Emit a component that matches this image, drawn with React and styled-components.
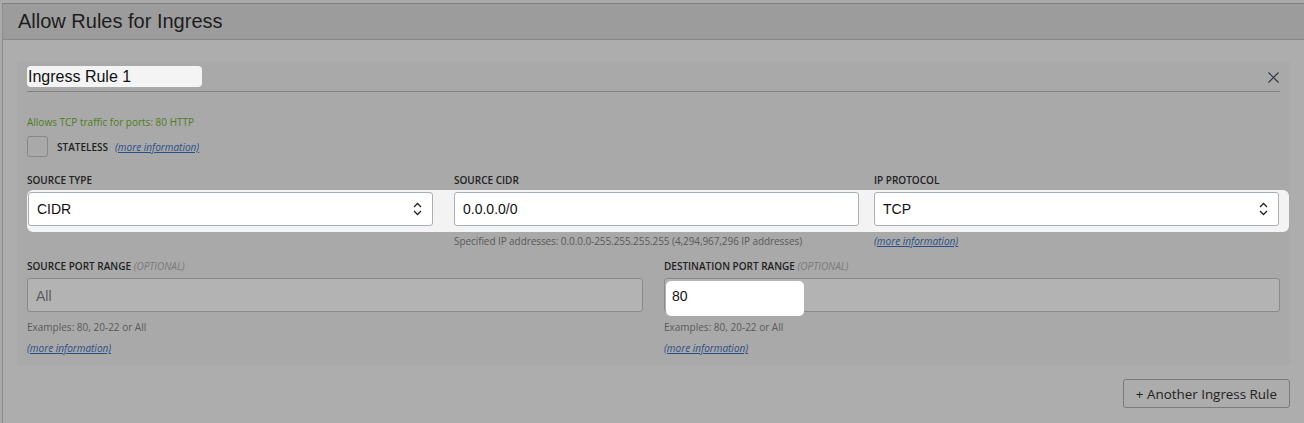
import React from "react";
import styled, { createGlobalStyle } from "styled-components";

const GlobalStyle = createGlobalStyle`
  html, body {
    margin: 0;
    padding: 0;
    background: #aaaaaa;
  }
  body {
    font-family: "Open Sans", "Noto Sans", sans-serif;
  }
`;

const Page = styled.div`
  width: 1304px;
  height: 423px;
  padding: 3px 0 0 2px;
  box-sizing: border-box;
  overflow: hidden;
`;

const Panel = styled.section`
  border-top: 1px solid #7f7f7f;
  border-left: 1px solid #8c8c8c;
  background: #adadad;
  height: 100%;
`;

const Header = styled.header`
  height: 35px;
  display: flex;
  align-items: center;
  padding-left: 15px;
  background: #9c9c9c;
  border-bottom: 1px solid #878787;
`;

const Title = styled.h2`
  margin: 0;
  font-family: "Liberation Sans", Arial, sans-serif;
  font-size: 20px;
  font-weight: 400;
  color: #1d1d1d;
`;

const Body = styled.div`
  padding: 21px 14px 0 14px;
  display: flex;
  flex-direction: column;
`;

const Card = styled.div`
  background: #a9a9a9;
  border-radius: 3px;
  padding: 5px 10px 10px 10px;
`;

const CardHead = styled.div`
  display: flex;
  align-items: flex-start;
  justify-content: space-between;
  height: 25px;
  border-bottom: 1px solid #818181;
`;

const NameField = styled.div`
  width: 174px;
  height: 21px;
  padding-left: 1px;
  display: flex;
  align-items: center;
  background: #f4f4f4;
  border-radius: 4px;
  font-family: "Liberation Sans", Arial, sans-serif;
  font-size: 16px;
  color: #111;
`;

const Close = styled.button`
  border: 0;
  background: none;
  padding: 0;
  margin: 6px 1px 0 0;
  width: 11px;
  height: 11px;
  display: flex;
  cursor: pointer;
`;

const Note = styled.div`
  margin-top: 23px;
  font-size: 10px;
  line-height: 14px;
  color: ${(p) => p.$color || "#595959"};
`;

const CheckRow = styled.div`
  display: flex;
  align-items: center;
  margin-top: 7px;
  height: 21px;
`;

const Checkbox = styled.span`
  width: 19px;
  height: 19px;
  border: 1px solid #878787;
  border-radius: 3px;
  margin-right: 9px;
`;

const Label = styled.span`
  font-size: 10px;
  font-weight: 600;
  color: #222;
  margin-right: 7px;
`;

const Optional = styled.em`
  font-weight: 400;
  color: #7a7a7a;
`;

const Link = styled.a`
  font-size: 10px;
  font-style: italic;
  color: #2a4f88;
  text-decoration: underline;
  cursor: pointer;
`;

const Grid = styled.div`
  display: grid;
  grid-template-columns: ${(p) => p.$cols};
  column-gap: ${(p) => p.$gap || 0}px;
  margin-top: ${(p) => p.$top || 0}px;
  line-height: 14px;
`;

const Band = styled.div`
  display: grid;
  grid-template-columns: 426px 420px 405px;
  margin-top: 3px;
  margin-right: -9px;
  padding: 2px 9px 6px 1px;
  background: #f3f3f3;
  border-radius: 6px;
`;

const Control = styled.div`
  width: 405px;
  height: 34px;
  box-sizing: border-box;
  display: flex;
  align-items: center;
  justify-content: space-between;
  padding: 0 10px 0 8px;
  background: #fff;
  border: 1px solid #a9afb8;
  border-radius: 3px;
  font-family: "Liberation Sans", Arial, sans-serif;
  font-size: 14px;
  color: #111;
`;

const DimInput = styled.div`
  height: 34px;
  box-sizing: border-box;
  display: flex;
  align-items: flex-start;
  padding: ${(p) => (p.$inset ? "2px 0 0 1px" : "10px 0 0 8px")};
  background: #b3b3b3;
  border: 1px solid #8a8a8a;
  border-radius: 3px;
  font-family: "Liberation Sans", Arial, sans-serif;
  font-size: 14px;
  color: #5c5c5c;
`;

const Spot = styled.div`
  width: 138px;
  height: 35px;
  flex-shrink: 0;
  padding: 8px 0 0 6px;
  box-sizing: border-box;
  background: #fff;
  border-radius: 5px;
  color: #111;
`;

const Help = styled.div`
  font-size: 10px;
  line-height: 14px;
  color: #5a5a5a;
  margin-top: ${(p) => p.$top || 0}px;
`;

const Spec = styled(Help)`
  letter-spacing: -0.08px;
`;

const Footer = styled.div`
  display: flex;
  justify-content: flex-end;
  margin-top: 14px;
`;

const AddButton = styled.button`
  height: 29px;
  padding: 0 12px;
  background: #acacac;
  border: 1px solid #7b7b7b;
  border-radius: 3px;
  font-family: "Open Sans", "Noto Sans", sans-serif;
  font-size: 13.4px;
  color: #222;
  cursor: pointer;
`;

const Chevrons = () => (
  <svg width="9" height="14" viewBox="0 0 9 14" fill="none" stroke="#222" strokeWidth="1.3">
    <path d="M1 5l3.5-3.5L8 5" />
    <path d="M1 9l3.5 3.5L8 9" />
  </svg>
);

export default function App() {
  return (
    <>
      <GlobalStyle />
      <Page>
        <Panel>
          <Header>
            <Title>Allow Rules for Ingress</Title>
          </Header>
          <Body>
            <Card>
              <CardHead>
                <NameField>Ingress Rule 1</NameField>
                <Close aria-label="remove">
                  <svg width="11" height="11" viewBox="0 0 11 11" stroke="#2f3540" strokeWidth="1.1">
                    <path d="M0.5 0.5l10 10M10.5 0.5l-10 10" />
                  </svg>
                </Close>
              </CardHead>
              <Note $color="#4f7d1c">Allows TCP traffic for ports: 80 HTTP</Note>
              <CheckRow>
                <Checkbox />
                <Label>STATELESS</Label>
                <Link>(more information)</Link>
              </CheckRow>

              <Grid $cols="427px 420px 405px" $top={16}>
                <Label>SOURCE TYPE</Label>
                <Label>SOURCE CIDR</Label>
                <Label>IP PROTOCOL</Label>
              </Grid>
              <Band>
                <Control>
                  CIDR
                  <Chevrons />
                </Control>
                <Control>0.0.0.0/0</Control>
                <Control>
                  TCP
                  <Chevrons />
                </Control>
              </Band>
              <Grid $cols="427px 420px 405px" $top={2}>
                <span />
                <Spec>Specified IP addresses: 0.0.0.0-255.255.255.255 (4,294,967,296 IP addresses)</Spec>
                <Link>(more information)</Link>
              </Grid>

              <Grid $cols="616px 616px" $gap={21} $top={11}>
                <Label>
                  SOURCE PORT RANGE <Optional>(OPTIONAL)</Optional>
                </Label>
                <Label>
                  DESTINATION PORT RANGE <Optional>(OPTIONAL)</Optional>
                </Label>
              </Grid>
              <Grid $cols="616px 616px" $gap={21} $top={5}>
                <DimInput>All</DimInput>
                <DimInput $inset>
                  <Spot>80</Spot>
                </DimInput>
              </Grid>
              <Grid $cols="616px 616px" $gap={21} $top={8}>
                <Help>Examples: 80, 20-22 or All</Help>
                <Help>Examples: 80, 20-22 or All</Help>
              </Grid>
              <Grid $cols="616px 616px" $gap={21} $top={7}>
                <Link>(more information)</Link>
                <Link>(more information)</Link>
              </Grid>
            </Card>
            <Footer>
              <AddButton>+ Another Ingress Rule</AddButton>
            </Footer>
          </Body>
        </Panel>
      </Page>
    </>
  );
}
